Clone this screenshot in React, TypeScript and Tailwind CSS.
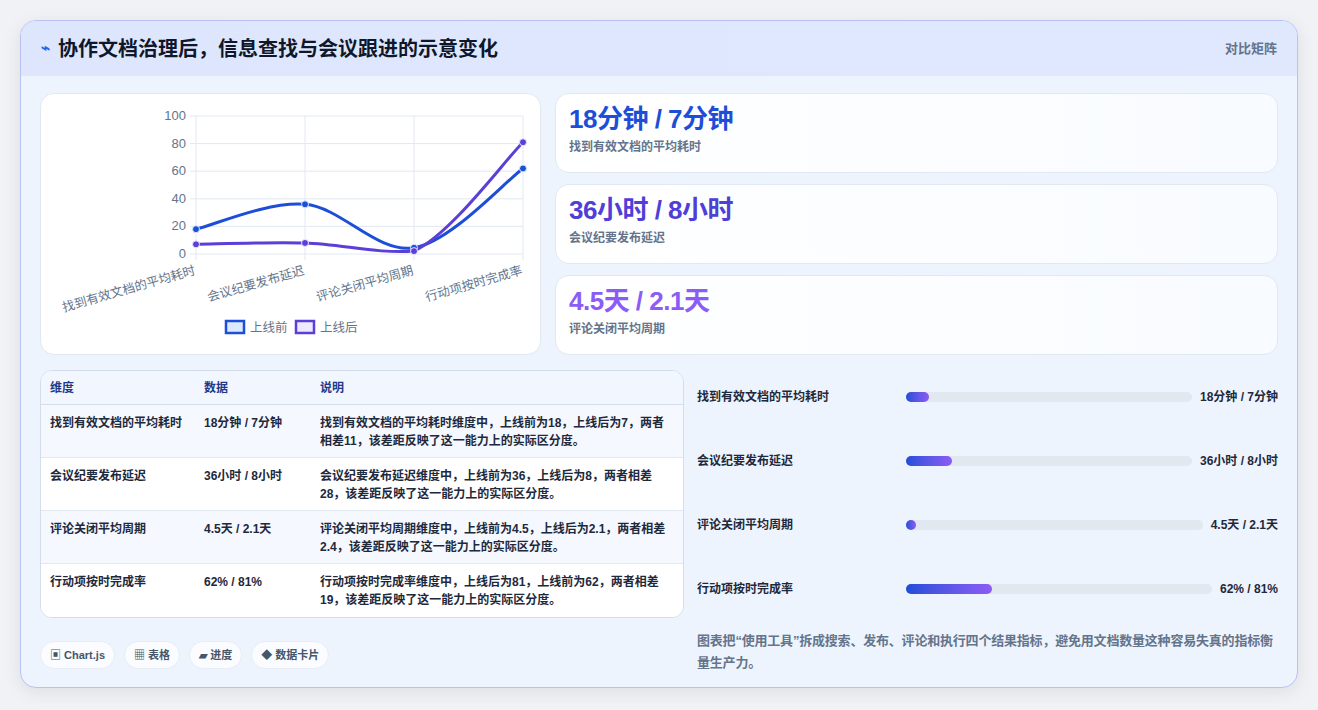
import React from "react";

const OX = 40, OY = 93;
const xs = [195, 304, 413, 522].map((x) => x - OX);
const yOf = (v: number) => 253 - v * 1.38 - OY;
const before = [18, 36, 4.5, 62];
const after = [7, 8, 2.1, 81];

function curve(vals: number[]) {
  const p = vals.map((v, i) => [xs[i], yOf(v)]);
  let d = `M${p[0][0]},${p[0][1]}`;
  const t = 0.17;
  const lim = yOf(0);
  for (let i = 0; i < p.length - 1; i++) {
    const p0 = p[i - 1] || p[i];
    const p1 = p[i];
    const p2 = p[i + 1];
    const p3 = p[i + 2] || p2;
    const c1 = [p1[0] + (p2[0] - p0[0]) * t, Math.min(lim, p1[1] + (p2[1] - p0[1]) * t)];
    const c2 = [p2[0] - (p3[0] - p1[0]) * t, Math.min(lim, p2[1] - (p3[1] - p1[1]) * t)];
    d += ` C${c1[0]},${c1[1]} ${c2[0]},${c2[1]} ${p2[0]},${p2[1]}`;
  }
  return d;
}

const cats = ["找到有效文档的平均耗时", "会议纪要发布延迟", "评论关闭平均周期", "行动项按时完成率"];

function Chart() {
  const ticks = [0, 20, 40, 60, 80, 100];
  return (
    <svg width="501" height="262" viewBox="0 0 501 262" className="block">
      {ticks.map((t) => (
        <g key={t}>
          <line x1={xs[0] - 6} x2={xs[3]} y1={yOf(t)} y2={yOf(t)} stroke="#e2e8f0" strokeWidth="1" />
          <text x={xs[0] - 10} y={yOf(t) + 4} textAnchor="end" fontSize="13" fill="#64748b">{t}</text>
        </g>
      ))}
      {xs.map((x) => (
        <line key={x} x1={x} x2={x} y1={yOf(100)} y2={yOf(0) + 6} stroke="#e2e8f0" />
      ))}
      {cats.map((c, i) => (
        <text key={c} x={xs[i]} y={yOf(0) + 20} textAnchor="end" fontSize="12.5" fill="#64748b" transform={`rotate(-16 ${xs[i]} ${yOf(0) + 20})`}>{c}</text>
      ))}
      <path d={curve(before)} fill="none" stroke="#1d4ed8" strokeWidth="3" />
      <path d={curve(after)} fill="none" stroke="#5b3fd8" strokeWidth="3" />
      {before.map((v, i) => <circle key={"b" + i} cx={xs[i]} cy={yOf(v)} r="3.5" fill="#1d4ed8" stroke="#dbeafe" strokeWidth="1" />)}
      {after.map((v, i) => <circle key={"a" + i} cx={xs[i]} cy={yOf(v)} r="3.5" fill="#5b3fd8" stroke="#ede9fe" strokeWidth="1" />)}
      <rect x="185" y="227" width="18" height="12" fill="#dbeafe" stroke="#1d4ed8" strokeWidth="2.5" />
      <text x="209" y="238" fontSize="12.5" fill="#64748b">上线前</text>
      <rect x="255" y="227" width="18" height="12" fill="#ede9fe" stroke="#5b3fd8" strokeWidth="2.5" />
      <text x="279" y="238" fontSize="12.5" fill="#64748b">上线后</text>
    </svg>
  );
}

const rows = [
  ["找到有效文档的平均耗时", "18分钟 / 7分钟", "找到有效文档的平均耗时维度中，上线前为18，上线后为7，两者相差11，该差距反映了这一能力上的实际区分度。"],
  ["会议纪要发布延迟", "36小时 / 8小时", "会议纪要发布延迟维度中，上线前为36，上线后为8，两者相差28，该差距反映了这一能力上的实际区分度。"],
  ["评论关闭平均周期", "4.5天 / 2.1天", "评论关闭平均周期维度中，上线前为4.5，上线后为2.1，两者相差2.4，该差距反映了这一能力上的实际区分度。"],
  ["行动项按时完成率", "62% / 81%", "行动项按时完成率维度中，上线后为81，上线前为62，两者相差19，该差距反映了这一能力上的实际区分度。"],
];

const bars = [
  ["找到有效文档的平均耗时", "18分钟 / 7分钟", 8],
  ["会议纪要发布延迟", "36小时 / 8小时", 16],
  ["评论关闭平均周期", "4.5天 / 2.1天", 3.5],
  ["行动项按时完成率", "62% / 81%", 28],
] as const;

export default function App() {
  return (
    <div className="w-[1318px] h-[710px] bg-[#f1f2f5] pt-[20px] px-[20px]" style={{ fontFamily: '"Liberation Sans", "Noto Sans CJK SC", sans-serif' }}>
      <div className="w-[1278px] h-[668px] rounded-[16px] border border-[#b9c3f3] bg-[#eef4fe] overflow-hidden shadow-[0_4px_16px_rgba(100,116,139,0.15)]">
        <div className="h-[55px] bg-gradient-to-r from-[#dde6fd] to-[#dfe8fd] flex items-center justify-between px-[20px]">
          <div className="flex items-center gap-[8px]">
            <span className="text-[#2563eb] text-[15px] font-bold">⌁</span>
            <span className="text-[20px] font-bold text-[#0f172a]">协作文档治理后，信息查找与会议跟进的示意变化</span>
          </div>
          <span className="text-[13px] font-semibold text-[#64748b]">对比矩阵</span>
        </div>
        <div className="px-[19px] pt-[17px]">
          <div className="flex gap-[14px]">
            <div className="w-[501px] h-[262px] bg-white rounded-[14px] border border-[#e2e8f0]">
              <Chart />
            </div>
            <div className="flex-1 flex flex-col gap-[11px]">
              {[
                ["18分钟 / 7分钟", "找到有效文档的平均耗时", "text-[#1d4ed8]"],
                ["36小时 / 8小时", "会议纪要发布延迟", "text-[#4f3fd6]"],
                ["4.5天 / 2.1天", "评论关闭平均周期", "text-[#8b5cf6]"],
              ].map(([v, l, c]) => (
                <div key={l} className="h-[80px] bg-gradient-to-r from-white to-[#f8fbff] rounded-[14px] border border-[#e2e8f0] px-[13px] pt-[8px]">
                  <div className={`text-[26px] font-bold leading-[34px] tracking-[-0.5px] ${c}`}>{v}</div>
                  <div className="text-[12px] font-semibold text-[#64748b] mt-[2px]">{l}</div>
                </div>
              ))}
            </div>
          </div>
          <div className="flex gap-[13px] mt-[15px]">
            <div className="w-[644px]">
              <div className="rounded-[12px] border border-[#d5dcea] overflow-hidden bg-white">
                <div className="flex h-[34px] items-center bg-[#f1f6ff] border-b border-[#d5dcea] text-[12px] font-bold text-[#1e3a8a]">
                  <div className="w-[163px] pl-[9px]">维度</div>
                  <div className="w-[116px]">数据</div>
                  <div className="flex-1">说明</div>
                </div>
                {rows.map((r, i) => (
                  <div key={i} className={`flex pt-[9px] h-[53px] text-[12px] font-semibold text-[#1e293b] leading-[18px] ${i < 3 ? "border-b border-[#e2e8f0]" : ""} ${i % 2 === 0 ? "bg-[#f5f8fe]" : "bg-white"}`}>
                    <div className="w-[163px] pl-[9px]">{r[0]}</div>
                    <div className="w-[116px]">{r[1]}</div>
                    <div className="flex-1 pr-[14px]">{r[2]}</div>
                  </div>
                ))}
              </div>
              <div className="flex gap-[9px] mt-[23px]">
                {["▣ Chart.js", "▦ 表格", "▰ 进度", "◆ 数据卡片"].map((p) => (
                  <span key={p} className="h-[28px] px-[9px] flex items-center rounded-full bg-white/70 border border-[#e8edf5] text-[11px] font-bold text-[#475569]">{p}</span>
                ))}
              </div>
            </div>
            <div className="flex-1">
              {bars.map(([l, v, w]) => (
                <div key={l} className="h-[64px] flex items-center gap-[8px] pb-[10px]">
                  <div className="w-[201px] text-[12px] font-semibold text-[#1e293b] shrink-0">{l}</div>
                  <div className="flex-1 h-[10px] rounded-full bg-[#e2e8f0]">
                    <div className="h-[10px] rounded-full bg-gradient-to-r from-[#1d4ed8] to-[#8b5cf6] min-w-[10px]" style={{ width: `${w}%` }} />
                  </div>
                  <div className="text-[12px] font-semibold text-[#1e293b] shrink-0">{v}</div>
                </div>
              ))}
              <div className="text-[13px] font-semibold text-[#64748b] leading-[22px] mt-[4px] tracking-[-0.2px]">
                图表把“使用工具”拆成搜索、发布、评论和执行四个结果指标，避免用文档数量这种容易失真的指标衡量生产力。
              </div>
            </div>
          </div>
        </div>
      </div>
    </div>
  );
}
